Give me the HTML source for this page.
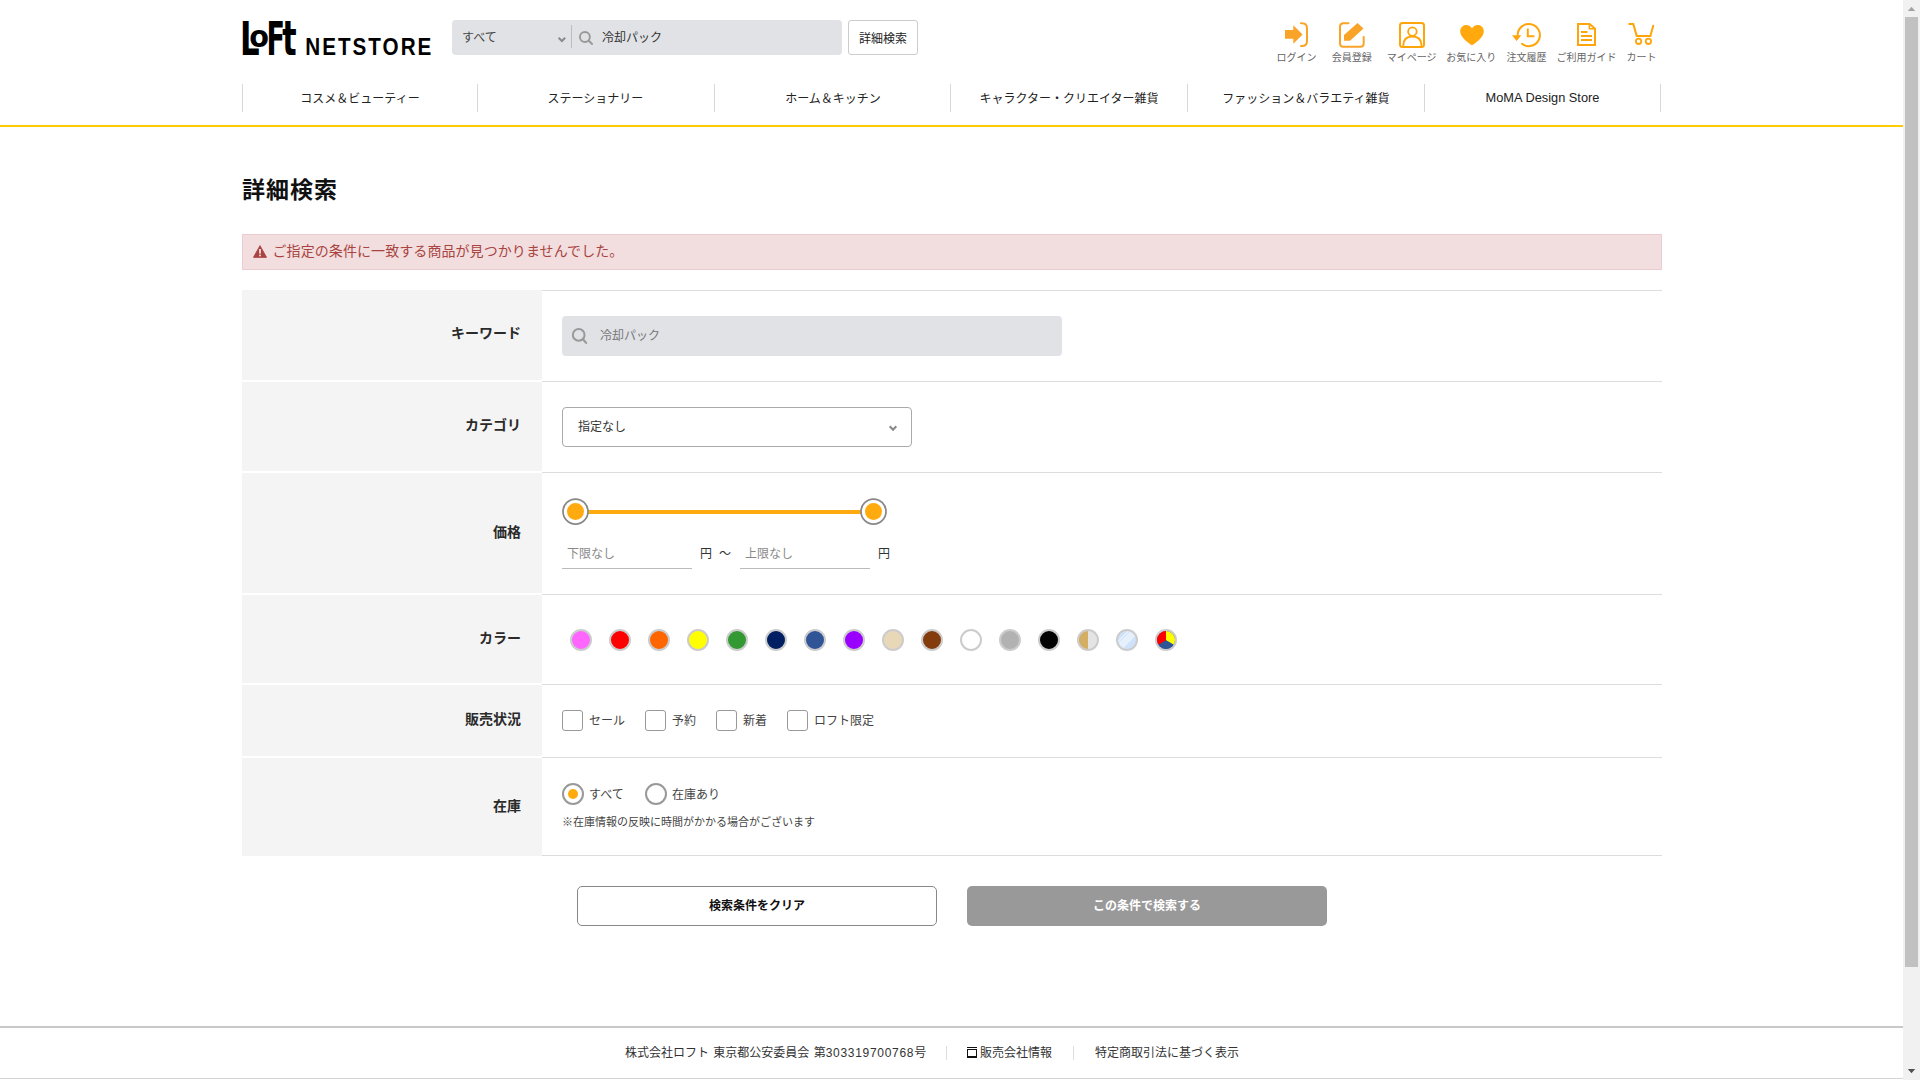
<!DOCTYPE html>
<html lang="ja">
<head>
<meta charset="utf-8">
<title>詳細検索 | LOFT NETSTORE</title>
<style>
*{box-sizing:border-box;margin:0;padding:0}
html,body{width:1920px;height:1080px;overflow:hidden;background:#fff}
body{font-family:"Liberation Sans","Noto Sans CJK JP",sans-serif;color:#222;font-size:13px;position:relative}
.abs{position:absolute}
#page{position:absolute;left:0;top:0;width:1903px;height:1080px;overflow:hidden;background:#fff}
/* scrollbar */
#sb{position:absolute;left:1903px;top:0;width:17px;height:1080px;background:#f1f1f1}
#sb .thumb{position:absolute;left:2px;top:17px;width:13px;height:950px;background:#c1c1c1}
/* header */
#logo{position:absolute;left:240px;top:15px;width:200px;height:45px}
#sbox{position:absolute;left:452px;top:20px;width:390px;height:35px;background:#e1e2e6;border-radius:4px}
#sbox .sel{position:absolute;left:10px;top:0;line-height:37px;font-size:12px;color:#444}
#sbox .div{position:absolute;left:119px;top:5px;width:1px;height:23px;background:#bdbdbd}
#sbox .kw{position:absolute;left:150px;top:0;line-height:37px;font-size:12px;color:#333}
#dbtn{position:absolute;left:848px;top:20px;width:70px;height:35px;border:1px solid #ccc;border-radius:3px;background:#fff;font-size:12px;line-height:36px;text-align:center;color:#222}
.hico{position:absolute;top:22px;text-align:center;font-size:10px;color:#666;white-space:nowrap;transform:translateX(-50%)}
.hico svg{display:block;margin:0 auto 2px}
/* nav */
#nav{position:absolute;left:242px;top:84px;width:1419px;height:28px}
#nav div{position:absolute;top:0;height:28px;width:237px;border-left:1px solid #d8d8d8;text-align:center;line-height:30px;font-size:12px;color:#222}
#yl{position:absolute;left:0;top:125px;width:1903px;height:2px;background:#ffcc00}
h1{position:absolute;left:242px;top:172px;font-size:23px;letter-spacing:1px;line-height:36px;font-weight:bold;color:#111}
#alert{position:absolute;left:242px;top:234px;width:1420px;height:36px;background:#f2dede;border:1px solid #ebccd1;color:#a94442;font-size:14px;line-height:33px;padding-left:29.5px;letter-spacing:0.08px}
.row{position:absolute;left:242px;width:1420px}
.row .lab{position:absolute;left:0;top:1px;width:300px;height:calc(100% - 2px);background:#f4f4f4;display:flex;align-items:center;justify-content:flex-end;padding:0 21px 5px 0;font-weight:bold;font-size:14px;color:#2a2a2a}
.row .cnt{position:absolute;left:300px;top:0;width:1120px;height:100%;border-top:1px solid #ddd}
.btn{position:absolute;top:886px;width:360px;height:40px;border-radius:5px;text-align:center;font-weight:bold;font-size:12px;line-height:38px}
#foot{position:absolute;left:0;top:1026px;width:1903px;height:53px;border-top:2px solid #c8c8c8;border-bottom:1px solid #d4d4d4;font-size:13px;color:#333}

.sw{position:absolute;top:34px;width:22px;height:22px;border-radius:50%;border:2px solid #ccc;background-clip:padding-box}
.hd{position:absolute;width:27px;height:27px;border-radius:50%;border:1.75px solid #888;background:#fff}
.hd:after{content:"";position:absolute;left:3.25px;top:3.25px;width:17px;height:17px;border-radius:50%;background:#ffab10}
.pin{position:absolute;top:64px;width:130px;height:32px;border-bottom:1px solid #bbb;font-size:12px;line-height:35px;padding-left:5px;color:#8a8a8a}
.cb{position:absolute;top:25px;width:21px;height:21px;border:1px solid #999;border-radius:3px;background:#fff}
.cl{position:absolute;top:26px;line-height:21px;font-size:12px;color:#444;white-space:nowrap}
.rd{position:absolute;top:25px;width:22px;height:22px;border:2px solid #999;border-radius:50%;background:#fff}
.rd i{position:absolute;left:4px;top:4px;width:10px;height:10px;border-radius:50%;background:#ffab10}
.rl{position:absolute;top:26px;line-height:22px;font-size:12px;color:#444;white-space:nowrap}

.hl{position:absolute;top:51px;font-size:10px;line-height:14px;color:#666;white-space:nowrap;transform:translateX(-50%)}
</style>
</head>
<body>
<div id="page">

<svg id="logo" viewBox="240 15 200 45">
<g font-family="DejaVu Sans, Liberation Sans, sans-serif" font-weight="bold" font-size="100" fill="#000">
<text transform="translate(240.03 55) scale(0.3077 0.4658)">L</text><text transform="translate(249.3 47.05) scale(0.287 0.3018)">o</text><text transform="translate(266.6 55) scale(0.27 0.4658)">F</text><text transform="translate(282.2 55) scale(0.3 0.486)">t</text></g>
<text transform="translate(305.2 55) scale(0.84 1)" font-family="Liberation Sans, sans-serif" font-weight="bold" font-size="24.6" letter-spacing="2.4" fill="#000">NETSTORE</text>
</svg>
<div id="sbox">
 <div class="sel">すべて</div>
 <svg class="abs" style="left:105px;top:16px" width="10" height="8" viewBox="0 0 10 8"><path d="M1.6 1.7 L4.9 5 L8.2 1.7" fill="none" stroke="#8a8a8a" stroke-width="2"/></svg>
 <div class="div"></div>
 <svg class="abs" style="left:125px;top:10px" width="18" height="18" viewBox="0 0 18 18"><circle cx="7.9" cy="7" r="4.95" fill="none" stroke="#999" stroke-width="1.9"/><path d="M11.5 10.6 L15.1 13.9" stroke="#999" stroke-width="2" stroke-linecap="round"/></svg>
 <div class="kw">冷却パック</div>
</div>
<div id="dbtn">詳細検索</div>

<svg class="abs" style="left:1270px;top:15px" width="400" height="36" viewBox="1270 15 400 36" fill="none" stroke-linecap="round" stroke-linejoin="round">
<!-- login -->
<g stroke="#f9a328" fill="#f9a328">
<path d="M1285 30 H1293.3 V25.2 L1302.6 34.4 L1293.3 43.8 V38.8 H1285 Z" stroke="none"/>
<path d="M1301 23.2 H1302 Q1307 23.2 1307 28.2 V41 Q1307 46 1302 46 H1301" fill="none" stroke-width="2"/>
</g>
<!-- register -->
<g stroke="#f9a328" fill="#f9a328">
<path d="M1348.5 23.2 H1343.5 Q1340 23.2 1340 26.7 V43.3 Q1340 46.8 1343.5 46.8 H1360.2 Q1363.7 46.8 1363.7 43.3 V37" fill="none" stroke-width="2"/>
<path d="M1357.5 23 L1363.5 28.5 L1350 40.7 H1344 V35 Z" stroke="none"/>
</g>
<!-- mypage -->
<g stroke="#ffa50c" stroke-width="2">
<rect x="1400" y="23" width="24" height="24" rx="2.5"/>
<circle cx="1412.4" cy="31.6" r="4.3" stroke-width="1.8"/>
<path d="M1403.2 46 Q1403.2 36.5 1412.4 36.5 Q1421.6 36.5 1421.6 46" stroke-width="1.8"/>
</g>
<!-- heart -->
<path d="M1472 45.2 C1469 43.3 1460.2 37.5 1460.2 31.4 C1460.2 27.6 1463 25 1466.2 25 C1468.8 25 1470.9 26.5 1472 28.4 C1473.1 26.5 1475.2 25 1477.8 25 C1481 25 1483.8 27.6 1483.8 31.4 C1483.8 37.5 1475 43.3 1472 45.2 Z" fill="#ffa90f"/>
<!-- history -->
<g stroke="#ffa50c" stroke-width="2">
<path d="M1517.7 35 A11.1 11.1 0 1 1 1522 43.8"/>
<path d="M1512 35.3 H1521.3 L1516.6 41 Z" fill="#ffa50c" stroke="none"/>
<path d="M1527.8 28.4 V36.2 H1534.4" stroke-linecap="butt" stroke-linejoin="miter"/>
</g>
<!-- guide -->
<g stroke="#ffa50c" stroke-width="2" stroke-linecap="butt" stroke-linejoin="miter">
<path d="M1578 24 H1589.6 L1595 28.6 V45 H1578 Z"/>
<path d="M1589.4 24 V28.8 H1595" stroke-width="1.6"/>
<path d="M1581 32 H1587.5 M1581 36 H1592 M1581 40 H1592"/>
</g>
<!-- cart -->
<g stroke="#ffa50c" stroke-width="2">
<path d="M1629.2 24.1 H1633.3 L1636.7 35.9 H1650.4 L1653.2 25.8" stroke-linejoin="miter"/>
<circle cx="1638.6" cy="41.3" r="2.7" stroke-width="1.8"/>
<circle cx="1648.4" cy="41.3" r="2.7" stroke-width="1.8"/>
</g>
</svg>
<div class="hl" style="left:1296.5px">ログイン</div>
<div class="hl" style="left:1351.7px">会員登録</div>
<div class="hl" style="left:1411.7px">マイページ</div>
<div class="hl" style="left:1471.2px">お気に入り</div>
<div class="hl" style="left:1526.6px">注文履歴</div>
<div class="hl" style="left:1586.5px">ご利用ガイド</div>
<div class="hl" style="left:1641.6px">カート</div>



<div id="nav">
<div style="left:0;padding-right:2px">コスメ＆ビューティー</div>
<div style="left:235px;padding-right:1px">ステーショナリー</div>
<div style="left:472px">ホーム＆キッチン</div>
<div style="left:708px">キャラクター・クリエイター雑貨</div>
<div style="left:945px">ファッション＆バラエティ雑貨</div>
<div style="left:1182px;border-right:1px solid #d8d8d8;font-size:12.8px;line-height:27px">MoMA Design Store</div>
</div>
<div id="yl"></div>


<h1>詳細検索</h1>
<div id="alert"><svg class="abs" style="left:9.5px;top:10px" width="14" height="13" viewBox="0 0 14 13"><path d="M7 0.6 L13.6 12.4 L0.4 12.4 Z" fill="#a94442" stroke="#a94442" stroke-width="0.8" stroke-linejoin="round"/><rect x="6.1" y="4" width="1.8" height="4.6" fill="#f2dede"/><rect x="6.1" y="9.6" width="1.8" height="1.7" fill="#f2dede"/></svg>ご指定の条件に一致する商品が見つかりませんでした。</div>

<div class="row" style="top:290px;height:91px"><div class="lab" style="top:0;height:calc(100% - 1px);padding-bottom:6px">キーワード</div><div class="cnt">
 <div class="abs" style="left:20px;top:25px;width:500px;height:40px;background:#e1e2e6;border-radius:4px">
  <svg class="abs" style="left:9px;top:11px" width="18" height="18" viewBox="0 0 18 18"><circle cx="7.7" cy="7.9" r="5.85" fill="none" stroke="#999" stroke-width="2"/><path d="M12 12.2 L15.1 15.9" stroke="#999" stroke-width="2.2" stroke-linecap="round"/></svg>
  <div class="abs" style="left:38px;top:0;line-height:40px;font-size:12px;color:#777">冷却パック</div>
 </div>
</div></div>

<div class="row" style="top:381px;height:91px"><div class="lab">カテゴリ</div><div class="cnt">
 <div class="abs" style="left:20px;top:25px;width:350px;height:40px;border:1px solid #aaa;border-radius:4px;background:#fff">
  <div class="abs" style="left:15px;top:0;line-height:39px;font-size:12px;color:#333">指定なし</div>
  <svg class="abs" style="left:324px;top:16px" width="12" height="9" viewBox="0 0 12 9"><path d="M2.7 2.3 L6 5.8 L9.3 2.3" fill="none" stroke="#888" stroke-width="2"/></svg>
 </div>
</div></div>

<div class="row" style="top:472px;height:122px"><div class="lab">価格</div><div class="cnt">
 <div class="abs" style="left:33px;top:37px;width:298px;height:4px;background:#ffab10"></div>
 <svg class="abs" style="left:18.95px;top:23.9px" width="29" height="29" viewBox="0 0 29 29"><circle cx="14.5" cy="14.5" r="12.5" fill="#fff" stroke="#888" stroke-width="1.75"/><circle cx="14.5" cy="14.5" r="8.5" fill="#ffab10"/></svg>
 <svg class="abs" style="left:317.15px;top:23.9px" width="29" height="29" viewBox="0 0 29 29"><circle cx="14.5" cy="14.5" r="12.5" fill="#fff" stroke="#888" stroke-width="1.75"/><circle cx="14.5" cy="14.5" r="8.5" fill="#ffab10"/></svg>
 <div class="pin" style="left:20px">下限なし</div>
 <div class="abs" style="left:158px;top:72px;font-size:12px;line-height:18px;color:#333">円</div>
 <div class="abs" style="left:177px;top:72px;font-size:12px;line-height:18px;color:#333">～</div>
 <div class="pin" style="left:198px">上限なし</div>
 <div class="abs" style="left:336px;top:72px;font-size:12px;line-height:18px;color:#333">円</div>
</div></div>

<div class="row" style="top:594px;height:90px"><div class="lab">カラー</div><div class="cnt">
<div class="sw" style="left:28px;background:#ff66ff"></div>
<div class="sw" style="left:67px;background:#ff0000"></div>
<div class="sw" style="left:106px;background:#ff6600"></div>
<div class="sw" style="left:145px;background:#ffff00"></div>
<div class="sw" style="left:184px;background:#339933"></div>
<div class="sw" style="left:223px;background:#001e62"></div>
<div class="sw" style="left:262px;background:#2f5597"></div>
<div class="sw" style="left:301px;background:#9900ff"></div>
<div class="sw" style="left:340px;background:#e8d8b8"></div>
<div class="sw" style="left:379px;background:#843c0c"></div>
<div class="sw" style="left:418px;background:#ffffff"></div>
<div class="sw" style="left:457px;background:#b2b2b2"></div>
<div class="sw" style="left:496px;background:#000000"></div>
<div class="sw" style="left:535px;background:linear-gradient(90deg,#d4ae62 0,#d4ae62 48%,#e4e4e4 48%,#e4e4e4 100%)"></div>
<div class="sw" style="left:574px;background:linear-gradient(135deg,#cfe2fa 0,#cfe2fa 26%,#e6f0fc 26%,#e6f0fc 31%,#cfe2fa 31%,#cfe2fa 36%,#e6f0fc 36%,#e6f0fc 62%,#cfe2fa 62%)"></div>
<div class="sw" style="left:613px;background:#2f5597;overflow:hidden"><svg class="abs" style="left:0;top:0" width="18" height="18" viewBox="0 0 18 18"><path d="M9 9.3 L9.00 -1.00 A10 10 0 0 1 17.48 14.30 Z" fill="#ffff00"/><path d="M9 9.3 L17.48 14.30 A10 10 0 0 1 0.52 14.30 Z" fill="#2f5597"/><path d="M9 9.3 L0.52 14.30 A10 10 0 0 1 9.00 -1.00 Z" fill="#ff0000"/></svg></div>

</div></div>

<div class="row" style="top:684px;height:73px"><div class="lab">販売状況</div><div class="cnt">
 <div class="cb" style="left:20px"></div><div class="cl" style="left:47px">セール</div>
 <div class="cb" style="left:103px"></div><div class="cl" style="left:130px">予約</div>
 <div class="cb" style="left:174px"></div><div class="cl" style="left:201px">新着</div>
 <div class="cb" style="left:245px"></div><div class="cl" style="left:272px">ロフト限定</div>
</div></div>

<div class="row" style="top:757px;height:98px"><div class="lab" style="height:98px">在庫</div><div class="cnt" style="height:99px;border-bottom:1px solid #ddd">
 <div class="rd" style="left:20px"><i></i></div><div class="rl" style="left:47px">すべて</div>
 <div class="rd" style="left:103px"></div><div class="rl" style="left:130px">在庫あり</div>
 <div class="abs" style="left:20px;top:56px;font-size:11px;line-height:16px;color:#444">※在庫情報の反映に時間がかかる場合がございます</div>
</div></div>

<div class="btn" style="left:577px;border:1px solid #888;background:#fff;color:#111">検索条件をクリア</div>
<div class="btn" style="left:967px;background:#999;color:#fff;line-height:40px">この条件で検索する</div>


<div id="foot">
 <div class="abs" style="left:625px;top:15px;line-height:20px;font-size:12px;white-space:nowrap;word-spacing:1px">株式会社ロフト 東京都公安委員会 第<span style="letter-spacing:0.7px">303319700768</span>号</div>
 <div class="abs" style="left:946px;top:18px;width:1px;height:14px;background:#ddd"></div>
 <div class="abs" style="left:967px;top:19px;width:10px;height:1px;background:#111"></div><div class="abs" style="left:967px;top:21px;width:10px;height:9px;border:1px solid #111;border-bottom-width:2px;border-left-width:1.5px"></div>
 <div class="abs" style="left:980px;top:15px;line-height:20px;font-size:12px;white-space:nowrap">販売会社情報</div>
 <div class="abs" style="left:1073px;top:18px;width:1px;height:14px;background:#ddd"></div>
 <div class="abs" style="left:1095px;top:15px;line-height:20px;font-size:12px;white-space:nowrap">特定商取引法に基づく表示</div>
</div>

</div>
<div id="sb"><svg class="abs" style="left:0;top:0" width="17" height="17" viewBox="0 0 17 17"><path d="M4.8 11 L8.5 6.8 L12.2 11 Z" fill="#a3a3a3"/></svg><div class="thumb"></div><svg class="abs" style="left:0;top:1063px" width="17" height="17" viewBox="0 0 17 17"><path d="M4.8 6 L12.2 6 L8.5 10.2 Z" fill="#505050"/></svg></div>
</body>
</html>
